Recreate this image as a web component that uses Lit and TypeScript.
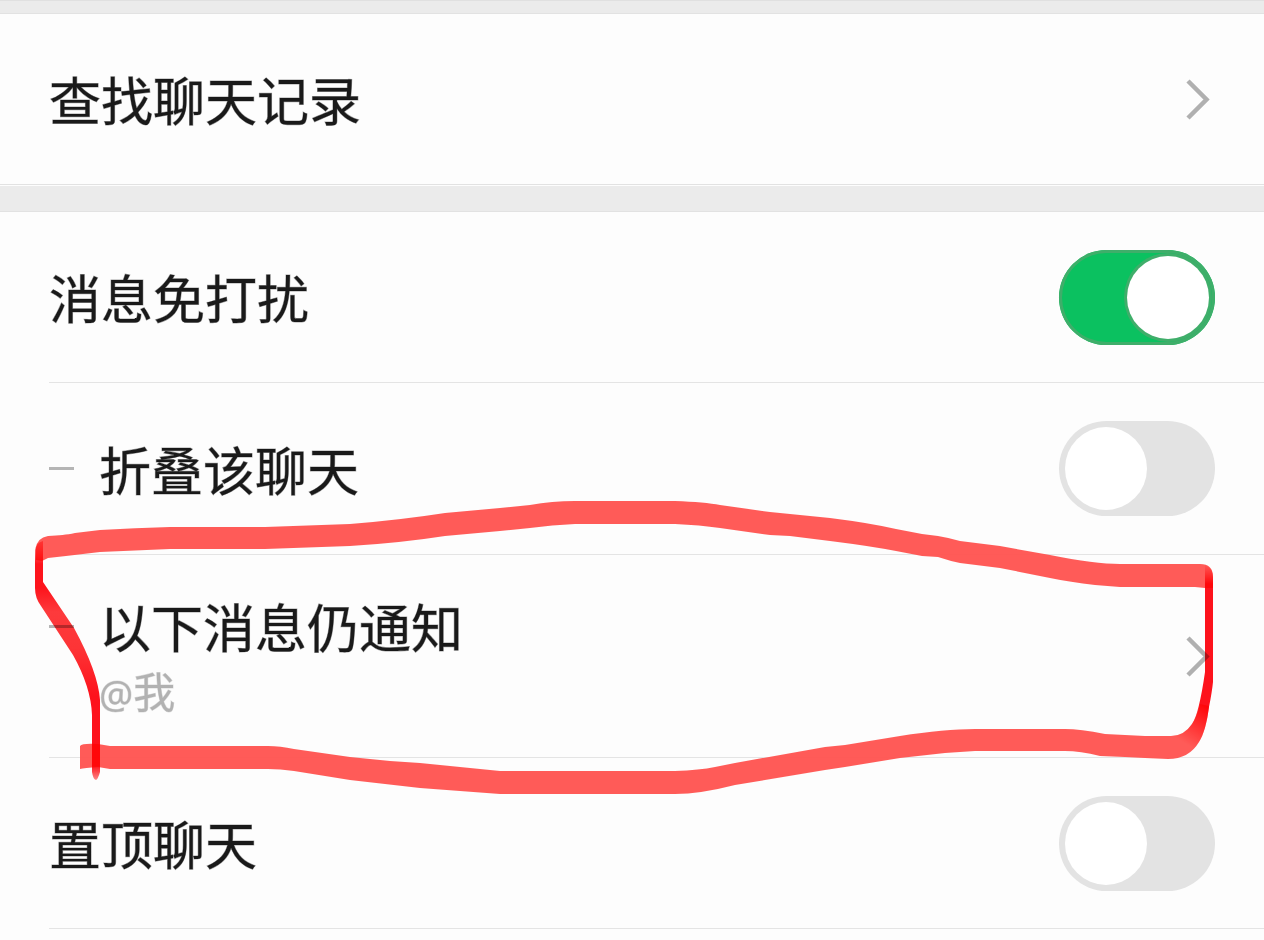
import { LitElement, html, css, svg } from "lit";
import { customElement, property } from "lit/decorators.js";

const chevron = svg`<svg class="chevron" viewBox="0 0 24 40" aria-hidden="true"><path d="M2 2 20.500 20.500 2 39" fill="none" stroke="#b0b0b0" stroke-width="4.500"/></svg>`;

@customElement("setting-switch")
class SettingSwitch extends LitElement {
  @property() label = "";
  @property({ type: Boolean }) checked = false;
  @property({ type: Boolean }) sub = false;

  static styles = css`
    :host { display: block; }
    .row {
      display: flex;
      align-items: center;
      min-height: 171px;
      box-sizing: border-box;
      margin-left: 49px;
      padding-right: 49px;
      border-bottom: 1px solid #e4e4e4;
    }
    .sub { min-height: 172px; }
    .dash { flex: none; width: 25px; height: 3px; margin-right: 25px; background: #b5b5b5; }
    .title { flex: 1; font-size: 52px; line-height: 60px; color: #1a1a1a; -webkit-text-stroke: 1px rgba(26, 26, 26, 0.4); }
    .switch {
      appearance: none;
      flex: none;
      box-sizing: border-box;
      width: 156px;
      height: 95px;
      margin: 0;
      padding: 6px;
      border-radius: 48px;
      background: #e3e3e3;
      display: flex;
    }
    .switch::before {
      content: "";
      width: 82px;
      height: 83px;
      border-radius: 50%;
      background: #fff;
    }
    .switch:checked {
      justify-content: flex-end;
      background: #0bc160;
      box-shadow: inset 0 0 0 3px #3fae6a;
    }
    .switch:checked::before { box-shadow: 0 0 0 3px #3fae6a; }
  `;

  render() {
    return html`<div class="row ${this.sub ? "sub" : ""}">
      ${this.sub ? html`<span class="dash"></span>` : ""}
      <label class="title" for="switch">${this.label}</label>
      <input class="switch" id="switch" type="checkbox" role="switch" .checked=${this.checked} />
    </div>`;
  }
}

@customElement("app-root")
class AppRoot extends LitElement {
  static styles = css`
    :host {
      display: block;
      position: relative;
      min-height: 100vh;
      overflow: hidden;
      background: #fdfdfd;
      font-family: "Noto Sans CJK SC", sans-serif;
    }
    .band { box-sizing: border-box; background: #ebebeb; border-bottom: 1px solid #e2e2e2; }
    .first { height: 14px; border-top: 1px solid #e0e0e0; }
    .middle { height: 26px; }
    .link {
      display: flex;
      align-items: center;
      box-sizing: border-box;
      border: 0;
      background: none;
      font-family: inherit;
      text-align: left;
      padding: 0 54px 0 0;
    }
    .search {
      width: 100%;
      min-height: 171px;
      padding-left: 49px;
      border-bottom: 1px solid #e2e2e2;
      margin-bottom: 1px;
    }
    .notify {
      width: calc(100% - 49px);
      min-height: 203px;
      margin-left: 49px;
      border-bottom: 1px solid #e4e4e4;
    }
    .texts { flex: 1; display: grid; grid-template-columns: auto 1fr; column-gap: 25px; align-items: center; }
    .dash { width: 25px; height: 3px; background: #b5b5b5; }
    .title { flex: 1; font-size: 52px; line-height: 68px; color: #1a1a1a; -webkit-text-stroke: 1px rgba(26, 26, 26, 0.4); }
    .detail { grid-column: 2; font-size: 42px; line-height: 60px; color: #b2b2b2; -webkit-text-stroke: 1px rgba(178, 178, 178, 0.4); }
    .at { font-family: "Noto Sans", sans-serif; font-size: 38px; line-height: 1; }
    .chevron { flex: none; width: 24px; height: 40px; overflow: visible; }
    .mark {
      position: absolute;
      left: 0;
      top: 0;
      width: 100%;
      height: 940px;
      pointer-events: none;
    }
    .ink { mix-blend-mode: multiply; }
  `;

  render() {
    return html`
      <main>
        <div class="band first"></div>
        <button class="link search"><span class="title">查找聊天记录</span>${chevron}</button>
        <div class="band middle"></div>
        <setting-switch label="消息免打扰" checked></setting-switch>
        <setting-switch label="折叠该聊天" sub></setting-switch>
        <button class="link notify">
          <span class="texts">
            <span class="dash"></span>
            <span class="title">以下消息仍通知</span>
            <span class="detail"><span class="at">@</span>我</span>
          </span>
          ${chevron}
        </button>
        <setting-switch label="置顶聊天"></setting-switch>
      </main>
      <svg class="mark" viewBox="0 0 1264 940" preserveAspectRatio="none" aria-hidden="true">
        <g fill="#ff5451" fill-opacity=".96">
          <path d="M36 560V548Q37 538 48 536C60 535 66 535 75 533L100 530Q135 528 170 527H265L350 524Q400 520 445 513L500 508 530 505Q552 501 575 501H675Q705 502 720 505L770 512 830 518Q870 523 896 529L922 534 938 536Q950 538 960 541L1000 546 1050 555Q1095 564 1120 564H1200Q1213 564 1213 577V588H1205L1195 587H1120L1095 585Q1070 582 1050 578L1000 568 960 563Q950 561 938 557L922 556 896 551Q870 546 830 541L790 536 770 535 720 528Q700 525 675 524H575Q552 525 530 528L500 531 445 536Q400 543 350 546L265 549H170L100 552 66 556 48 558 42 561Z" />
          <path d="M80 746Q82 743 98 744L110 746H268Q280 746 294 749L350 757Q385 761 420 763L500 771H675Q700 770 715 767L735 763 825 747 845 745 900 736Q945 729 975 729H1065Q1080 729 1105 734L1125 735 1145 736H1171Q1184 736 1192 724 1197 716 1200 704L1209 706Q1206 731 1199 742 1189 759 1168 759L1145 758 1125 757 1100 756Q1080 751 1065 751H975Q960 752 945 753L900 758 845 767 825 770 735 785Q700 794 675 794H500L420 788Q385 784 350 780L294 771Q280 769 268 769H110L98 767Q84 768 80 769Z" />
        </g>
      </svg>
      <svg class="mark ink" viewBox="0 0 1264 940" preserveAspectRatio="none" aria-hidden="true">
        <defs>
          <linearGradient id="left" gradientUnits="userSpaceOnUse" x1="0" y1="540" x2="0" y2="780">
            <stop offset="0" stop-color="#ff9a9a" />
            <stop offset=".1" stop-color="#ff141c" />
            <stop offset=".2" stop-color="#ff141c" />
            <stop offset=".3" stop-color="#ff3a3c" />
            <stop offset=".45" stop-color="#ff3436" />
            <stop offset=".65" stop-color="#ff121c" />
            <stop offset=".94" stop-color="#ff121c" />
            <stop offset="1" stop-color="#ff8a8a" />
          </linearGradient>
          <linearGradient id="right" gradientUnits="userSpaceOnUse" x1="1208" y1="708" x2="1186" y2="744">
            <stop offset="0" stop-color="#ff121c" />
            <stop offset="1" stop-color="#ff121c" stop-opacity="0" />
          </linearGradient>
          <linearGradient id="corner" gradientUnits="userSpaceOnUse" x1="0" y1="564" x2="0" y2="584">
            <stop offset="0" stop-color="#ff121c" stop-opacity="0" />
            <stop offset="1" stop-color="#ff121c" />
          </linearGradient>
        </defs>
        <path fill="url(#left)" d="M35 550Q36 543 43 541V582L74 628Q98 672 100 700V772Q98 779 96 780Q93 779 92 772V715Q91 687 73 655L41 606Q35 598 35 588Z" />
        <path fill="url(#right)" d="M1205 585H1213V682Q1212 692 1209 707Q1206 731 1199 742Q1189 757 1175 759L1171 736Q1184 736 1192 724Q1199 714 1205 672Z" />
        <path fill="url(#corner)" d="M1205 565Q1213 568 1213 577V585H1205Z" />
      </svg>
    `;
  }
}
